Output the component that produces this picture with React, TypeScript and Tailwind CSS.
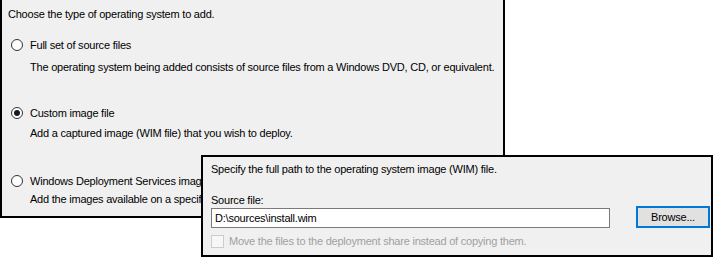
import React from "react";

const Radio = ({ checked }: { checked?: boolean }) => (
  <span className="flex h-[12px] w-[12px] shrink-0 items-center justify-center rounded-full border border-[#333333] bg-white">
    {checked ? <span className="h-[6px] w-[6px] rounded-full bg-[#1a1a1a]" /> : null}
  </span>
);

const App = () => {
  return (
    <div
      className="relative h-[257px] w-[713px] overflow-hidden whitespace-nowrap bg-white text-[11px] leading-[14px] tracking-[-0.22px] text-black"
      style={{ fontFamily: '"Liberation Sans", Arial, sans-serif' }}
    >
      {/* Add OS wizard page */}
      <div className="h-[218px] w-[505px] overflow-hidden border-b-2 border-l-2 border-r-2 border-black bg-[#f0f0f0] pl-[6px] pt-[7px]">
        <div className="h-[14px]">Choose the type of operating system to add.</div>

        <div className="mt-[17px] flex h-[14px] items-center gap-[7px] pl-[3px]">
          <Radio />
          <span>Full set of source files</span>
        </div>
        <div className="mt-[8px] h-[14px] pl-[22px]">
          The operating system being added consists of source files from a Windows DVD, CD, or equivalent.
        </div>

        <div className="mt-[32px] flex h-[14px] items-center gap-[7px] pl-[3px]">
          <Radio checked />
          <span>Custom image file</span>
        </div>
        <div className="mt-[6px] h-[14px] pl-[22px]">
          Add a captured image (WIM file) that you wish to deploy.
        </div>

        <div className="mt-[34px] flex h-[14px] items-center gap-[7px] pl-[3px]">
          <Radio />
          <span>Windows Deployment Services images</span>
        </div>
        <div className="mt-[4px] h-[14px] pl-[22px]">
          Add the images available on a specific Windows Deployment Services server.
        </div>
      </div>

      {/* Image path page, overlapping */}
      <div className="absolute left-[201px] top-[155px] h-[102px] w-[512px] border-2 border-black bg-[#f0f0f0] pl-[8px] pt-[5px]">
        <div className="h-[14px]">Specify the full path to the operating system image (WIM) file.</div>
        <div className="mt-[17px] h-[14px]">Source file:</div>
        <div className="mt-[1px] flex items-center gap-[26px]">
          <div className="flex h-[20px] w-[399px] items-center border border-[#7a7a7a] bg-white pl-[3px]">
            D:\sources\install.wim
          </div>
          <button className="-mt-[2px] flex h-[22px] w-[74px] items-center justify-center border-2 border-[#0078d7] bg-[#e1e1e1] text-[11px] tracking-[-0.22px]">
            Browse...
          </button>
        </div>
        <div className="mt-[6px] flex h-[14px] items-center gap-[5px] text-[#a0a0a0]">
          <span className="h-[13px] w-[13px] shrink-0 border border-[#cccccc] bg-[#f7f7f7]" />
          <span>Move the files to the deployment share instead of copying them.</span>
        </div>
      </div>
    </div>
  );
};

export default App;
